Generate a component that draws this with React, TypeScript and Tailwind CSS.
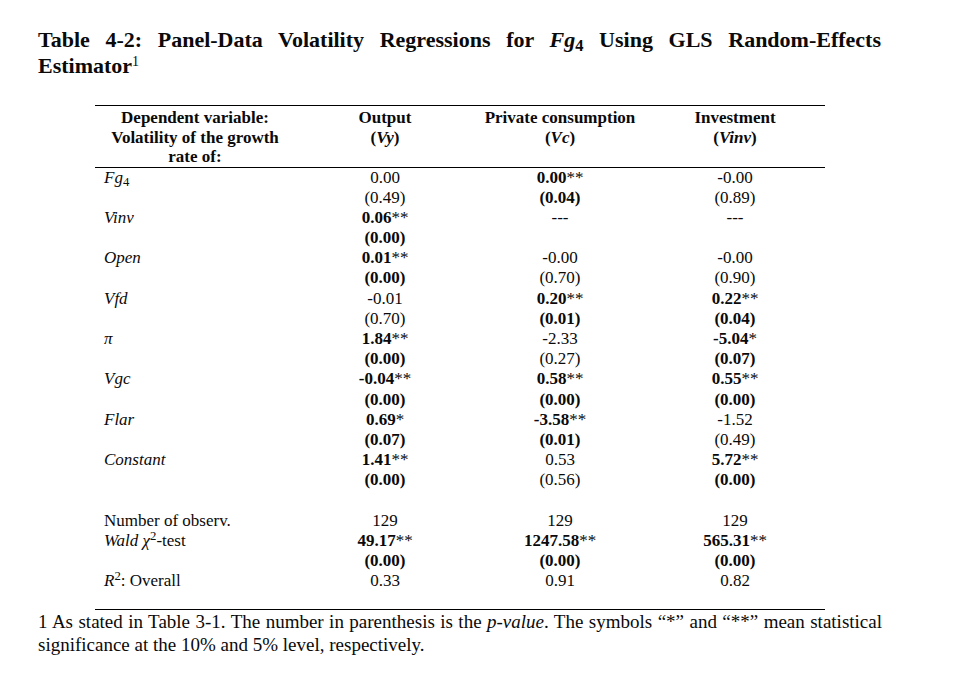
import React from 'react';

type Cell = { v: string; b?: boolean };
type Row = { label?: React.ReactNode; cells: Cell[] };

const n = (v: string): Cell => ({ v });
const b = (v: string): Cell => ({ v, b: true });
const e: Cell = { v: '' };

const rows: Row[] = [
  { label: <>Fg<sub className="not-italic">4</sub></>, cells: [n('0.00'), b('0.00**'), n('-0.00')] },
  { cells: [n('(0.49)'), b('(0.04)'), n('(0.89)')] },
  { label: 'Vinv', cells: [b('0.06**'), n('---'), n('---')] },
  { cells: [b('(0.00)'), e, e] },
  { label: 'Open', cells: [b('0.01**'), n('-0.00'), n('-0.00')] },
  { cells: [b('(0.00)'), n('(0.70)'), n('(0.90)')] },
  { label: 'Vfd', cells: [n('-0.01'), b('0.20**'), b('0.22**')] },
  { cells: [n('(0.70)'), b('(0.01)'), b('(0.04)')] },
  { label: 'π', cells: [b('1.84**'), n('-2.33'), b('-5.04*')] },
  { cells: [b('(0.00)'), n('(0.27)'), b('(0.07)')] },
  { label: 'Vgc', cells: [b('-0.04**'), b('0.58**'), b('0.55**')] },
  { cells: [b('(0.00)'), b('(0.00)'), b('(0.00)')] },
  { label: 'Flar', cells: [b('0.69*'), b('-3.58**'), n('-1.52')] },
  { cells: [b('(0.07)'), b('(0.01)'), n('(0.49)')] },
  { label: 'Constant', cells: [b('1.41**'), n('0.53'), b('5.72**')] },
  { cells: [b('(0.00)'), n('(0.56)'), b('(0.00)')] },
];

const stats: Row[] = [
  { label: <span className="not-italic">Number of observ.</span>, cells: [n('129'), n('129'), n('129')] },
  {
    label: (
      <>
        Wald <span>χ</span><sup className="not-italic">2</sup><span className="not-italic">-test</span>
      </>
    ),
    cells: [b('49.17**'), b('1247.58**'), b('565.31**')],
  },
  { cells: [b('(0.00)'), b('(0.00)'), b('(0.00)')] },
  {
    label: (
      <>
        R<sup className="not-italic">2</sup><span className="not-italic">: Overall</span>
      </>
    ),
    cells: [n('0.33'), n('0.91'), n('0.82')],
  },
];

const cols = 'grid grid-cols-[200px_180px_170px_180px]';

function Value({ cell }: { cell: Cell }) {
  const m = cell.v.match(/^(.*?)(\*+)?$/);
  const num = m ? m[1] : cell.v;
  const stars = m && m[2] ? m[2] : '';
  return (
    <div className="text-center">
      <span className={cell.b ? 'font-bold' : ''}>{num}</span>
      {stars && <span className="font-normal">{stars}</span>}
    </div>
  );
}

function TableRow({ row }: { row: Row }) {
  return (
    <div className={`${cols} h-[20.2px] leading-[20.2px]`}>
      <div className="pl-[9px] italic">{row.label}</div>
      {row.cells.map((c, i) => (
        <Value key={i} cell={c} />
      ))}
    </div>
  );
}

export default function App() {
  return (
    <div className="min-h-[697px] w-[961px] bg-white text-[#0a0a0a] font-['Liberation_Serif','Times_New_Roman',serif]">
      <div className="pl-[38px] pt-[27px]">
        {/* Title */}
        <div className="w-[843px] text-[22px] font-bold leading-[26px]">
          <div className="text-justify [text-align-last:justify]">
            Table 4-2: Panel-Data Volatility Regressions for <i>Fg</i><sub>4</sub> Using GLS Random-Effects
          </div>
          <div>
            Estimator<sup className="text-[14px] font-normal">1</sup>
          </div>
        </div>

        {/* Table */}
        <div className="ml-[57px] mt-[26px] w-[730px] border-y border-black text-[17px]">
          <div className={`${cols} border-b border-black pt-[2px] font-bold leading-[19.5px]`}>
            <div className="text-center">
              Dependent variable:
              <br />
              Volatility of the growth
              <br />
              rate of:
            </div>
            <div className="text-center">
              Output
              <br />(<i>Vy</i>)
            </div>
            <div className="text-center">
              Private consumption
              <br />(<i>Vc</i>)
            </div>
            <div className="text-center">
              Investment
              <br />(<i>Vinv</i>)
            </div>
          </div>

          <div>
            {rows.map((r, i) => (
              <TableRow key={i} row={r} />
            ))}
          </div>
          <div className="h-[20.2px]" />
          <div className="pb-[18px]">
            {stats.map((r, i) => (
              <TableRow key={i} row={r} />
            ))}
          </div>
        </div>

        {/* Footnote */}
        <div className="w-[844px] text-[19px] leading-[23px]">
          <div className="text-justify [text-align-last:justify]">
            1 As stated in Table 3-1. The number in parenthesis is the <i>p-value</i>. The symbols “*” and “**” mean statistical
          </div>
          <div>significance at the 10% and 5% level, respectively.</div>
        </div>
      </div>
    </div>
  );
}
